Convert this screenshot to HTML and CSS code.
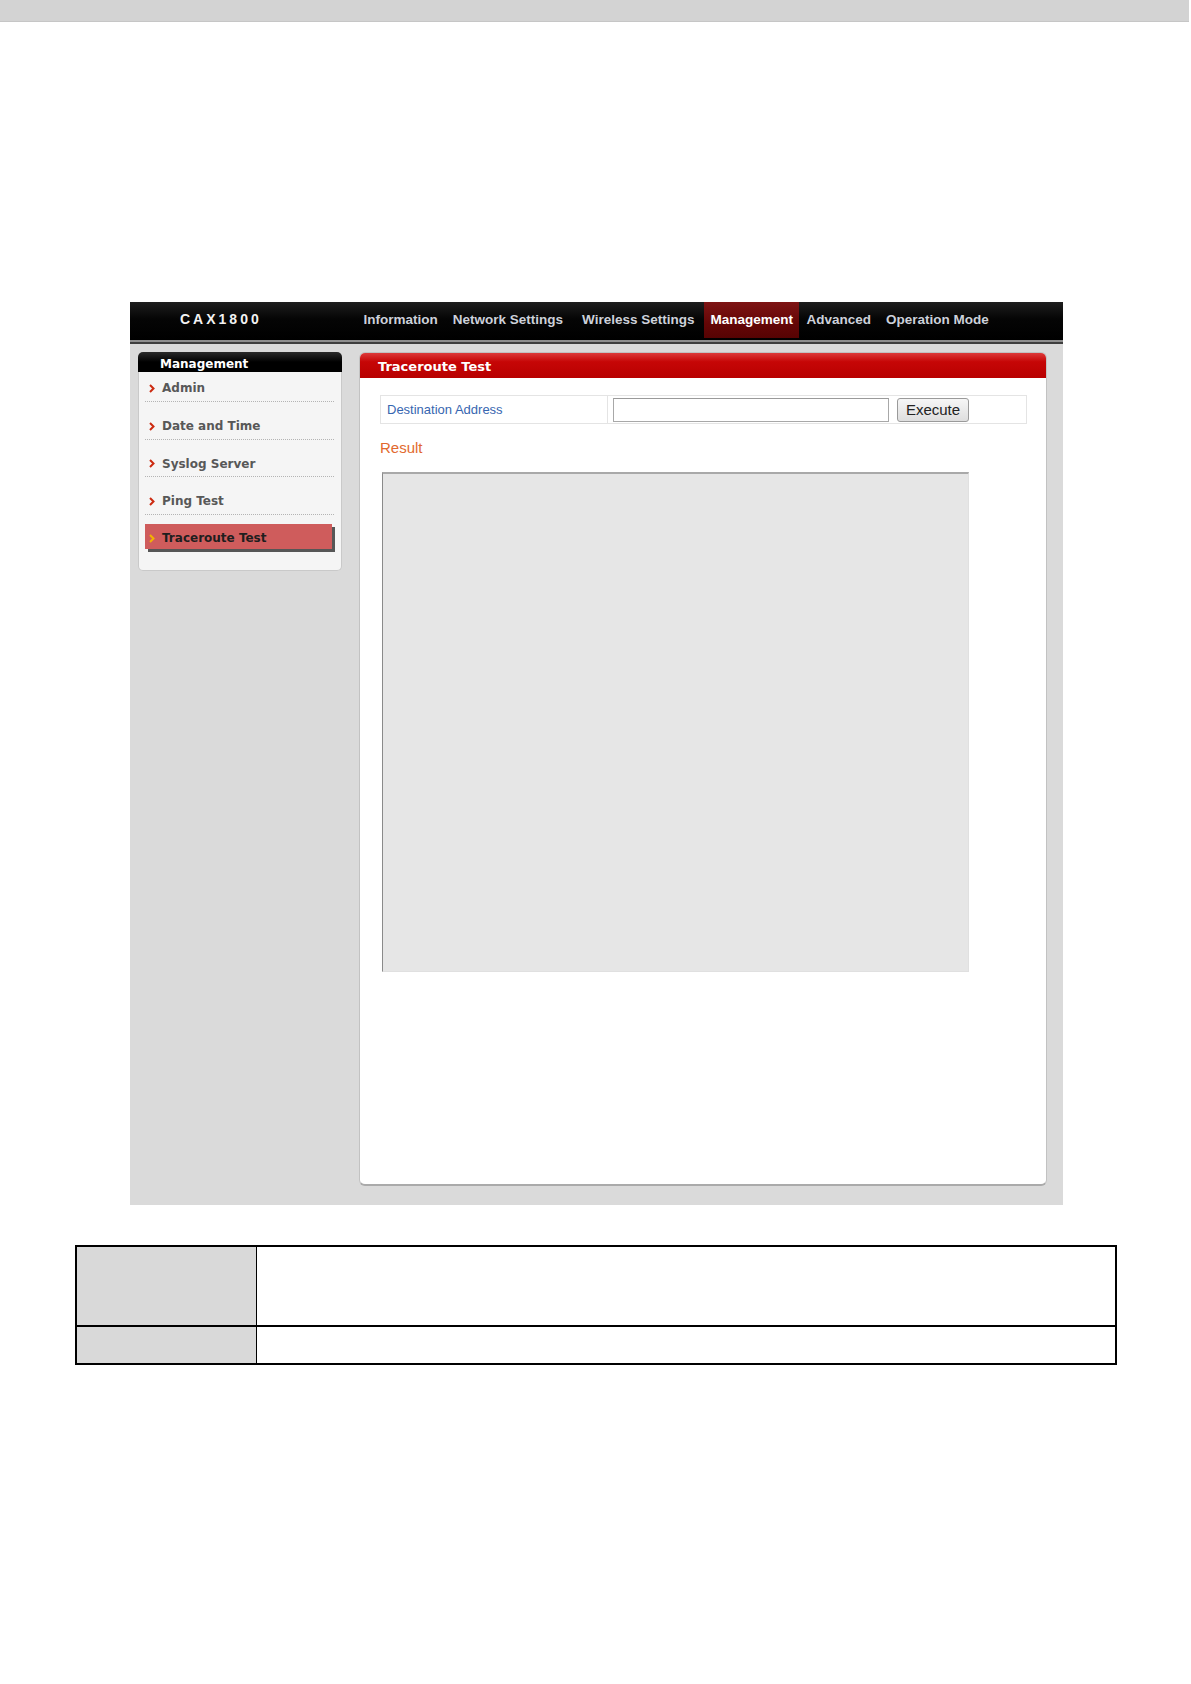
FILE: index.html
```html
<!DOCTYPE html>
<html>
<head>
<meta charset="utf-8">
<title>Traceroute Test</title>
<link rel="stylesheet" href="styles.css">
</head>
<body>
<div class="topbar"></div>
<div class="shot">
  <div class="header">
    <div class="logo">CAX1800</div>
    <nav class="nav">
      <span class="nav-item">Information</span>
      <span class="nav-item nav-wide">Network Settings</span>
      <span class="nav-item">Wireless Settings</span>
      <span class="nav-item nav-active">Management</span>
      <span class="nav-item">Advanced</span>
      <span class="nav-item">Operation Mode</span>
    </nav>
  </div>
  <div class="header-rule"></div>
  <div class="content">
    <aside class="sidebar">
      <div class="side-head">Management</div>
      <ul class="side-list">
        <li class="side-item"><svg class="chev" viewBox="0 0 6 9"><path d="M1 1 L4.5 4.5 L1 8"/></svg>Admin</li>
        <li class="side-item"><svg class="chev" viewBox="0 0 6 9"><path d="M1 1 L4.5 4.5 L1 8"/></svg>Date and Time</li>
        <li class="side-item"><svg class="chev" viewBox="0 0 6 9"><path d="M1 1 L4.5 4.5 L1 8"/></svg>Syslog Server</li>
        <li class="side-item"><svg class="chev" viewBox="0 0 6 9"><path d="M1 1 L4.5 4.5 L1 8"/></svg>Ping Test</li>
        <li class="side-item side-active"><svg class="chev" viewBox="0 0 6 9"><path d="M1 1 L4.5 4.5 L1 8"/></svg>Traceroute Test</li>
      </ul>
    </aside>
    <main class="panel">
      <div class="panel-head">Traceroute Test</div>
      <div class="panel-body">
        <div class="form-row">
          <div class="form-label">Destination Address</div>
          <div class="form-field">
            <input class="text-input" type="text">
            <button class="btn" type="button">Execute</button>
          </div>
        </div>
        <div class="result-label">Result</div>
        <div class="result-box"></div>
      </div>
    </main>
  </div>
</div>
<div class="doc-table">
  <div class="cell cell-head"></div>
  <div class="cell"></div>
  <div class="cell cell-head row2"></div>
  <div class="cell row2"></div>
</div>
</body>
</html>
```
FILE: styles.css
```css
* { box-sizing: border-box; }
html, body { margin: 0; padding: 0; background: #fff; }
body { font-family: "Liberation Sans", Arial, sans-serif; }

.topbar {
  height: 22px;
  width: 1189px;
  background: #d3d3d3;
  border-bottom: 1px solid #c6c6c6;
}

.shot {
  margin-top: 280px;
  margin-left: 130px;
  width: 933px;
  height: 903px;
  background: #dadada;
}

.header {
  height: 38px;
  display: flex;
  align-items: stretch;
  background: linear-gradient(#1e1e1e 0%, #050505 45%, #000 100%);
}
.logo {
  margin-left: 50px;
  width: 176px;
  padding-bottom: 4px;
  color: #f2f2f2;
  font: bold 14px "Liberation Sans", Arial, sans-serif;
  letter-spacing: 3px;
  display: flex;
  align-items: center;
}
.nav { display: flex; align-items: stretch; }
.nav-item {
  display: flex;
  align-items: center;
  padding: 0 7.5px 4px;
  font: bold 13.5px "Liberation Sans", Arial, sans-serif;
  color: #cdd1da;
  white-space: nowrap;
}
.nav-wide { margin-right: 4px; }
.nav-active {
  padding: 0 6px 2px;
  margin: 0 0 2px 2.5px;
  color: #fff;
  background: linear-gradient(#7e1414 0%, #640606 60%, #560303 100%);
}
.header-rule {
  height: 4px;
  border-top: 2px solid #8e8e8e;
  border-bottom: 2px solid #3e3e3e;
}

.content {
  display: flex;
  align-items: flex-start;
  padding: 8px 16px 0 8px;
  gap: 17px;
}

.sidebar { width: 204px; flex: none; }
.side-head {
  height: 20px;
  background: linear-gradient(#2a2a2a, #000 50%);
  border-radius: 5px 5px 0 0;
  color: #fff;
  font: bold 12px "DejaVu Sans", Verdana, sans-serif;
  line-height: 20px;
  padding: 2px 0 0 22px;
}
.side-list {
  list-style: none;
  margin: 0;
  padding: 0 7px 21px 6px;
  background: #f5f5f5;
  border: 1px solid #c9c9c9;
  border-top: none;
  border-radius: 0 0 5px 5px;
}
.side-item {
  height: 30px;
  margin-top: 7.5px;
  padding: 4px 0 0 4px;
  line-height: 24px;
  border-bottom: 1px dotted #b4b4b4;
  font: bold 12px "DejaVu Sans", Verdana, sans-serif;
  color: #585858;
  display: flex;
  align-items: center;
}
.side-item:first-child { margin-top: 0; padding-top: 3px; }
.chev {
  width: 6px;
  height: 9px;
  margin-right: 7px;
  flex: none;
  fill: none;
  stroke: #cc2a10;
  stroke-width: 2;
}
.side-active {
  margin-top: 9.5px;
  margin-right: 2px;
  height: 25px;
  padding: 3px 0 0 4px;
  line-height: 22px;
  border-bottom: none;
  background: #cf5c5c;
  box-shadow: 3px 3px 0 #565656;
  color: #1e1e1e;
}
.side-active .chev { stroke: #f2b400; }

.panel {
  width: 688px;
  height: 834px;
  flex: none;
  background: #fff;
  border: 1px solid #c2c2c2;
  border-bottom: 2px solid #aaaaaa;
  border-radius: 6px;
  overflow: hidden;
}
.panel-head {
  height: 25px;
  background: linear-gradient(#dc3a3a 0%, #c60606 35%, #b80000 100%);
  color: #fff;
  font: bold 13px "DejaVu Sans", Verdana, sans-serif;
  line-height: 28px;
  padding-left: 18px;
}
.panel-body { padding: 17px 19px 0 20px; }

.form-row {
  display: flex;
  width: 647px;
  height: 29px;
  border: 1px solid #e4e4e4;
}
.form-label {
  width: 227px;
  border-right: 1px solid #e4e4e4;
  color: #3766b0;
  font-size: 13px;
  line-height: 27px;
  padding-left: 6px;
}
.form-field {
  display: flex;
  align-items: center;
  padding-left: 5px;
  gap: 8px;
}
.text-input {
  width: 276px;
  height: 24px;
  margin: 0;
  border: 1px solid #a8a8a8;
  border-top-color: #9a9a9a;
  background: #fff;
}
.btn {
  width: 72px;
  height: 24px;
  margin: 0;
  padding: 0;
  border: 1px solid #9a9a9a;
  border-radius: 3px;
  background: linear-gradient(#f6f6f6, #dedede);
  color: #222;
  font: 15px "Liberation Sans", Arial, sans-serif;
}

.result-label {
  margin-top: 15px;
  height: 18px;
  line-height: 18px;
  color: #e2692e;
  font-size: 15px;
}
.result-box {
  margin-top: 15px;
  margin-left: 2px;
  width: 587px;
  height: 500px;
  background: #e6e6e6;
  border-top: 2px solid #a9a9a9;
  border-left: 1px solid #8a8a8a;
  border-right: 1px solid #e0e0e0;
  border-bottom: 1px solid #e0e0e0;
}

.doc-table {
  margin-top: 40px;
  margin-left: 75px;
  width: 1042px;
  display: grid;
  grid-template-columns: 180px 1fr;
  grid-template-rows: 78px 38px;
  border: 2px solid #000;
}
.cell { background: #fff; }
.cell-head { background: #d9d9d9; border-right: 1px solid #000; }
.row2 { border-top: 2px solid #000; }
```
